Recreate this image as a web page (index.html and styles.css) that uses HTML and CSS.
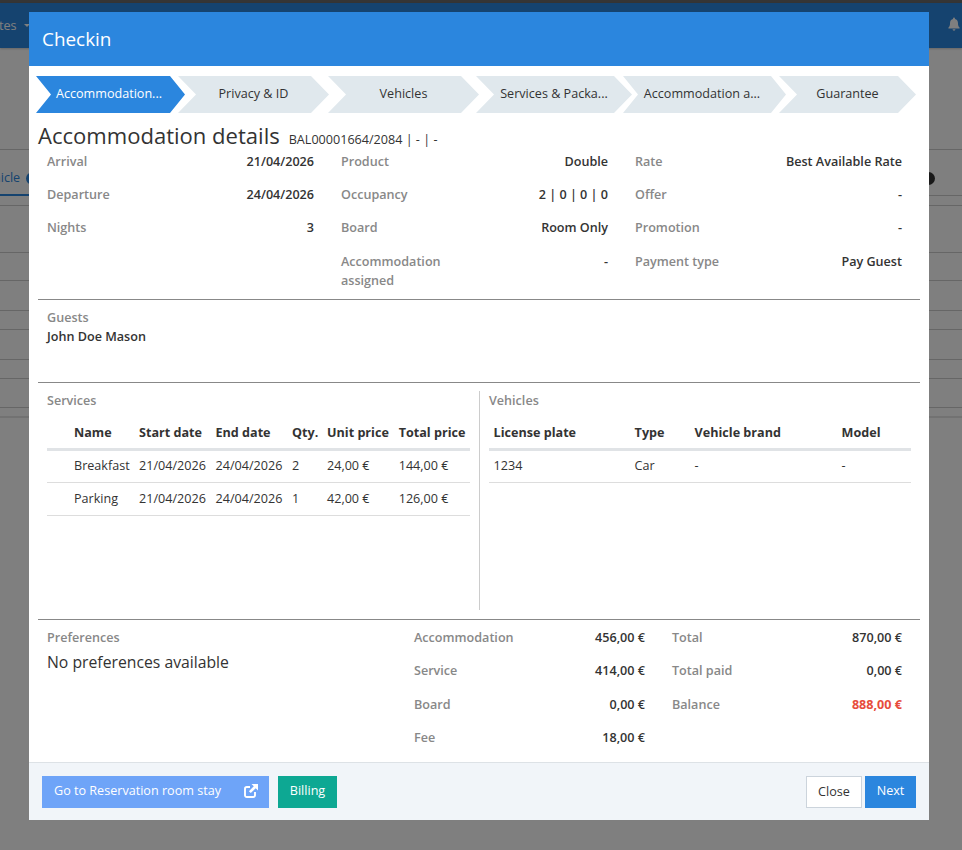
FILE: index.html
```html
<!DOCTYPE html>
<html lang="en">
<head>
<meta charset="utf-8">
<title>Checkin</title>
<link rel="stylesheet" href="styles.css">
</head>
<body>
<div class="backdrop-page">
  <div class="topstrip"></div>
  <div class="navbar">
    <span class="nav-text">tes</span><span class="caret"></span>
    <svg class="bell" viewBox="0 0 14 16"><path d="M7 0.5a1.100 1.100 0 0 0-1.100 1.100v.5C3.700 2.600 2.400 4.400 2.400 6.500c0 3.600-.9 4.600-1.900 5.700v1h13v-1c-1-1.100-1.900-2.100-1.900-5.700 0-2.100-1.300-3.900-3.500-4.400v-.5A1.100 1.100 0 0 0 7 .5zM5.300 14.100a1.700 1.700 0 0 0 3.400 0z"/></svg>
  </div>
  <div class="bg-rows">
    <div class="bg-row r0"></div>
    <div class="bg-row r1"><span class="bg-tab">hicle</span><span class="dot left"></span><span class="dot right"></span></div>
    <div class="bg-row r2"></div>
    <div class="bg-row r3"></div>
    <div class="bg-row r4"></div>
    <div class="bg-row r5"></div>
    <div class="bg-row r6"></div>
    <div class="bg-row r7"></div>
    <div class="bg-row r8"></div>
    <div class="bg-row r9"></div>
    <div class="bg-row r10"></div>
  </div>
</div>
<div class="overlay"></div>
<main class="modal">
  <header class="modal-head">Checkin</header>
  <div class="modal-body">
    <nav class="steps">
      <div class="step first active"><span>Accommodation...</span></div>
      <div class="step s2"><span>Privacy &amp; ID</span></div>
      <div class="step s3"><span>Vehicles</span></div>
      <div class="step s4"><span>Services &amp; Packa...</span></div>
      <div class="step s5"><span>Accommodation a...</span></div>
      <div class="step s6"><span>Guarantee</span></div>
    </nav>
    <div class="title-row">
      <h1>Accommodation details</h1>
      <span class="ref">BAL00001664/2084 | - | -</span>
    </div>
    <section class="details">
      <div class="col">
        <div class="kv"><span class="k">Arrival</span><span class="v">21/04/2026</span></div>
        <div class="kv"><span class="k">Departure</span><span class="v">24/04/2026</span></div>
        <div class="kv"><span class="k">Nights</span><span class="v">3</span></div>
      </div>
      <div class="col">
        <div class="kv"><span class="k">Product</span><span class="v">Double</span></div>
        <div class="kv"><span class="k">Occupancy</span><span class="v">2 | 0 | 0 | 0</span></div>
        <div class="kv"><span class="k">Board</span><span class="v">Room Only</span></div>
        <div class="kv"><span class="k narrow">Accommodation assigned</span><span class="v">-</span></div>
      </div>
      <div class="col">
        <div class="kv"><span class="k">Rate</span><span class="v">Best Available Rate</span></div>
        <div class="kv"><span class="k">Offer</span><span class="v">-</span></div>
        <div class="kv"><span class="k">Promotion</span><span class="v">-</span></div>
        <div class="kv"><span class="k">Payment type</span><span class="v">Pay Guest</span></div>
      </div>
    </section>
    <section class="guests">
      <div class="k">Guests</div>
      <div class="guest-name">John Doe Mason</div>
    </section>
    <section class="lists">
      <div class="list-left">
        <div class="k list-title">Services</div>
        <table class="tbl services">
          <thead><tr><th class="c-icon"></th><th class="c-name">Name</th><th class="c-start">Start date</th><th class="c-end">End date</th><th class="c-qty">Qty.</th><th class="c-unit">Unit price</th><th>Total price</th></tr></thead>
          <tbody>
            <tr><td></td><td>Breakfast</td><td>21/04/2026</td><td>24/04/2026</td><td>2</td><td>24,00 €</td><td>144,00 €</td></tr>
            <tr><td></td><td>Parking</td><td>21/04/2026</td><td>24/04/2026</td><td>1</td><td>42,00 €</td><td>126,00 €</td></tr>
          </tbody>
        </table>
      </div>
      <div class="list-right">
        <div class="k list-title">Vehicles</div>
        <table class="tbl vehicles">
          <thead><tr><th class="c-plate">License plate</th><th class="c-type">Type</th><th class="c-brand">Vehicle brand</th><th>Model</th></tr></thead>
          <tbody><tr><td>1234</td><td>Car</td><td>-</td><td>-</td></tr></tbody>
        </table>
      </div>
    </section>
    <section class="summary">
      <div class="prefs">
        <div class="k">Preferences</div>
        <div class="no-prefs">No preferences available</div>
      </div>
      <div class="sum-col">
        <div class="kv"><span class="k">Accommodation</span><span class="v">456,00 €</span></div>
        <div class="kv"><span class="k">Service</span><span class="v">414,00 €</span></div>
        <div class="kv"><span class="k">Board</span><span class="v">0,00 €</span></div>
        <div class="kv"><span class="k">Fee</span><span class="v">18,00 €</span></div>
      </div>
      <div class="sum-col">
        <div class="kv"><span class="k">Total</span><span class="v">870,00 €</span></div>
        <div class="kv"><span class="k">Total paid</span><span class="v">0,00 €</span></div>
        <div class="kv"><span class="k">Balance</span><span class="v danger">888,00 €</span></div>
      </div>
    </section>
  </div>
  <footer class="modal-foot">
    <div class="foot-left">
      <button class="btn btn-link">Go to Reservation room stay
        <svg class="ext" viewBox="0 0 14 14"><path d="M11 8v3.200A1.800 1.800 0 0 1 9.200 13H2.800A1.800 1.800 0 0 1 1 11.200V4.800A1.800 1.800 0 0 1 2.800 3H6" fill="none" stroke="#fff" stroke-width="1.900"/><path d="M7.500 0h6.500v6.500l-2.300-2.300-4.900 4.900-1.900-1.900 4.900-4.900z" fill="#fff"/></svg>
      </button>
      <button class="btn btn-billing">Billing</button>
    </div>
    <div class="foot-right">
      <button class="btn btn-close">Close</button>
      <button class="btn btn-next">Next</button>
    </div>
  </footer>
</main>
</body>
</html>
```
FILE: styles.css
```css
* { box-sizing: border-box; }
html, body { margin: 0; height: 100%; }
body {
  width: 962px;
  height: 850px;
  overflow: hidden;
  position: relative;
  background: #fff;
  font-family: "Open Sans", "Noto Sans", sans-serif;
  font-size: 12.6px;
  line-height: 19px;
  color: #333;
}

/* page behind the dialog */
.topstrip { height: 3px; background: #6b6b6b; }
.navbar {
  height: 45px;
  background: #2b86de;
  display: flex;
  align-items: center;
  color: #fff;
  position: relative;
  box-shadow: 0 1px 2px rgba(0, 0, 0, 0.2);
}
.nav-text { margin-left: -1px; margin-bottom: 1px; }
.caret {
  width: 0; height: 0; margin-left: 7px;
  border-left: 3px solid transparent;
  border-right: 3px solid transparent;
  border-top: 3px solid #fff;
}
.bell { position: absolute; right: 2px; top: 14px; width: 12px; height: 14px; }
.bell path { fill: #fff; }
.bg-row { border-bottom: 1px solid #ccc; }
.r0 { height: 102px; }
.r1 { height: 46px; display: flex; align-items: flex-start; padding-top: 18px; }
.r2 { height: 10px; }
.r3 { height: 47px; }
.r4 { height: 28px; }
.r5 { height: 30px; }
.r6 { height: 19px; }
.r7 { height: 30px; }
.r8 { height: 19px; }
.r9 { height: 29px; }
.r10 { height: 10px; border-bottom-width: 2px; border-bottom-color: #e4e4e4; }
.bg-tab {
  margin-left: -7px;
  width: 36px;
  height: 28px;
  color: #2b86de;
  border-bottom: 2px solid #2b86de;
}
.dot { width: 13px; height: 13px; border-radius: 50%; margin-top: 4px; }
.dot.left { background: #2b86de; margin-left: -3px; }
.dot.right { background: #333; margin-left: auto; margin-right: 27px; }
.overlay { position: absolute; inset: 0; background: rgba(0, 0, 0, 0.5); }

/* dialog */
.modal {
  position: absolute;
  left: 29px; top: 12px;
  width: 900px; height: 808px;
  background: #fff;
  display: flex;
  flex-direction: column;
}
.modal-head {
  height: 54px;
  background: #2b86de;
  color: #fff;
  font-size: 18.9px;
  line-height: 54px;
  padding-left: 13px;
}
.modal-body { flex: 1; padding: 10px 9px 0; display: flex; flex-direction: column; }

.steps { display: flex; height: 37px; margin-left: -2px; }
.step {
  height: 37px;
  background: #e0e8ed;
  display: flex;
  align-items: center;
  justify-content: center;
  padding-bottom: 2px;
  color: #333;
  flex: none;
  clip-path: polygon(0 0, calc(100% - 18px) 0, 100% 50%, calc(100% - 18px) 100%, 0 100%, 18px 50%);
}
.step.active { background: #2b86de; color: #fff; }
.step.first {
  width: 149px;
  padding-right: 3px;
  clip-path: polygon(0 0, calc(100% - 15px) 0, 100% 50%, calc(100% - 15px) 100%, 0 100%, 15px 50%);
}
.s2 { width: 151px; margin-left: -7px; }
.s3 { width: 151px; margin-left: -1px; }
.s4 { width: 156px; margin-left: -3px; }
.s5 {
  width: 163px; margin-left: -9px; padding-right: 5px;
  clip-path: polygon(0 0, calc(100% - 15px) 0, 100% 50%, calc(100% - 15px) 100%, 0 100%, 15px 50%);
}
.s6 { width: 137px; margin-left: -7px; }

.title-row { display: flex; align-items: baseline; height: 40px; padding-top: 6px; }
h1 { margin: 0; font-size: 22.05px; font-weight: 400; line-height: 33px; color: #333; }
.ref { margin-left: 9px; }

.k { color: #888; font-weight: 600; }
.v { font-weight: 600; text-align: right; color: #333; }
.kv { display: flex; justify-content: space-between; }

.details {
  display: grid;
  grid-template-columns: 294px 294px 294px;
  border-bottom: 1px solid #888;
  height: 148px;
  margin-top: -1px;
}
.details .col { padding: 0 18px 0 9px; }
.details .kv { min-height: 33.2px; }
.narrow { width: 110px; }

.guests { height: 83px; padding: 8px 9px 0; border-bottom: 1px solid #888; }
.guest-name { font-weight: 600; color: #333; }

.lists { display: flex; height: 237px; border-bottom: 1px solid #888; padding-top: 8px; }
.list-left { width: 442px; height: 219px; padding: 0 9px; border-right: 1px solid #ccc; }
.list-right { flex: 1; padding: 0 9px; }
.list-title { height: 19px; }
.tbl { border-collapse: separate; border-spacing: 0; table-layout: fixed; margin-top: 4px; }
.tbl th {
  text-align: left;
  font-weight: 700;
  height: 37px;
  padding: 9px 0 0;
  vertical-align: top;
  border-bottom: 3px solid #e0e3e6;
  color: #333;
}
.tbl td { height: 33px; padding: 0 0 2px; border-bottom: 1px solid #ddd; color: #333; }
.tbl tbody tr:first-child td { height: 32px; padding-bottom: 3px; }
.services { width: 423px; }
.c-icon { width: 27px; }
.c-name { width: 65px; }
.c-start { width: 76.5px; }
.c-end { width: 76.5px; }
.c-qty { width: 35px; }
.c-unit { width: 71.7px; }
.vehicles th, .vehicles td { padding-left: 4.6px; }
.vehicles { width: 422px; }
.c-plate { width: 141px; }
.c-type { width: 60px; }
.c-brand { width: 147px; }

.summary { display: flex; padding-top: 8px; }
.prefs { width: 367px; padding-left: 9px; }
.no-prefs { font-size: 15.75px; line-height: 24px; margin-top: 3px; color: #333; }
.sum-col { width: 257px; padding: 0 17px 0 10px; }
.sum-col:nth-child(2) { padding-left: 9px; }
.sum-col .kv { height: 33.4px; }
.danger { color: #e74c3c; font-weight: 700; }

.modal-foot {
  height: 58px;
  background: #f1f5f9;
  border-top: 1px solid #dde2e6;
  display: flex;
  justify-content: space-between;
  padding: 13px 13px 0;
}
.foot-left, .foot-right { display: flex; height: 32px; }
.btn {
  font-family: inherit;
  font-size: 12.6px;
  line-height: 19px;
  border: 0;
  padding: 0 12px 3px;
  height: 32px;
  color: #fff;
}
.btn-link {
  width: 227px;
  background: #6ea4f8;
  display: flex;
  align-items: center;
  justify-content: space-between;
  padding-right: 11px;
}
.ext { width: 14px; height: 14px; }
.btn-billing { background: #0da893; margin-left: 9px; width: 59px; padding-left: 0; padding-right: 0; }
.btn-close { background: #fff; color: #333; border: 1px solid #ccd4dc; width: 56px; padding: 0 0 2px; }
.btn-next { background: #2b86de; margin-left: 3px; width: 51px; padding: 0 0 3px; }
```
